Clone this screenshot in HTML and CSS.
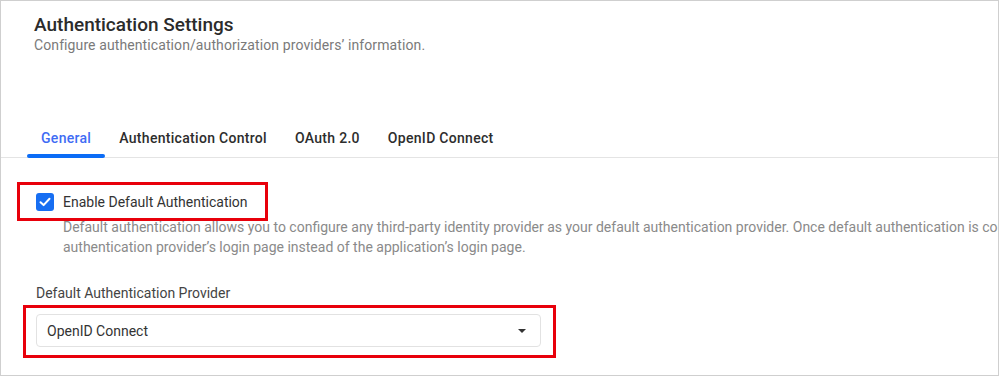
FILE: index.html
```html
<!DOCTYPE html>
<html>
<head>
<link rel="stylesheet" href="styles.css">
</head>
<body>
<div class="frame">
  <div class="header">
    <h1 class="title">Authentication Settings</h1>
    <p class="subtitle">Configure authentication/authorization providers’ information.</p>
  </div>

  <nav class="tabs">
    <a class="tab active">General</a>
    <a class="tab">Authentication Control</a>
    <a class="tab">OAuth 2.0</a>
    <a class="tab">OpenID Connect</a>
  </nav>

  <div class="content">
    <div class="check-row">
      <label class="check mark mark-check">
        <span class="box">
          <svg width="12" height="10" viewBox="0 0 12 10"><path d="M1.5 5.2 L4.6 8.1 L10.5 1.8" fill="none" stroke="#fff" stroke-width="2" stroke-linecap="round" stroke-linejoin="round"/></svg>
        </span>
        <span class="check-label">Enable Default Authentication</span>
      </label>
    </div>
    <p class="desc">Default authentication allows you to configure any third-party identity provider as your default authentication provider. Once default authentication is configured, users are redirected to the<br>authentication provider’s login page instead of the application’s login page.</p>

    <div class="field">
      <div class="field-label">Default Authentication Provider</div>
      <div class="mark mark-select">
        <div class="select">
          <span>OpenID Connect</span>
          <span class="caret"></span>
        </div>
      </div>
    </div>
  </div>
</div>
</body>
</html>
```

FILE: styles.css
```css
body {
    margin: 0;
    background: #fff;
}
.frame {
    width: 999px;
    height: 376px;
    box-sizing: border-box;
    border: 1px solid #cfcfcf;
    overflow: hidden;
    font-family: Roboto, 'Noto Sans', sans-serif;
    color: #333;
}
.header {
    padding: 13px 0 0 33px;
}
.title {
    margin: 0;
    font-size: 19px;
    font-weight: 500;
    line-height: 22px;
    color: #2b2b2b;
}
.subtitle {
    margin: 0;
    font-size: 14px;
    line-height: 18px;
    letter-spacing: 0.1px;
    color: #7a7a7a;
}
.tabs {
    display: flex;
    margin-top: 66px;
    padding-left: 26px;
    border-bottom: 1px solid #e4e4e4;
}
.tab {
    position: relative;
    height: 37px;
    box-sizing: border-box;
    padding: 10px 14px 0 14px;
    font-size: 14px;
    font-weight: 500;
    line-height: 16px;
    letter-spacing: 0.3px;
    color: #2d2d2d;
    cursor: pointer;
}
.tab.active {
    color: #3f6cf4;
}
.tab.active::after {
    content: '';
    position: absolute;
    left: 0;
    right: 0;
    bottom: -1px;
    height: 4px;
    border-radius: 2px;
    background: #0b6cf6;
}
.content {
    padding-left: 35px;
}
.check-row {
    margin-top: 35px;
    display: flex;
}
.check {
    display: flex;
    align-items: center;
    gap: 9px;
}
.box {
    width: 18px;
    height: 18px;
    border-radius: 3px;
    background: #176ef2;
    display: flex;
    align-items: center;
    justify-content: center;
}
.check-label {
    font-size: 14px;
    line-height: 18px;
    color: #333;
}
.desc {
    margin: 6px 0 0 27px;
    font-size: 14px;
    line-height: 20px;
    color: #8a8a8a;
    white-space: nowrap;
}
.field {
    margin-top: 27px;
}
.field-label {
    font-size: 14px;
    line-height: 18px;
    color: #444;
}
.select {
    margin-top: 12px;
    width: 505px;
    height: 33px;
    box-sizing: border-box;
    border: 1px solid #e2e2e2;
    border-radius: 4px;
    padding: 0 14px 0 10px;
    display: flex;
    align-items: center;
    justify-content: space-between;
    font-size: 14px;
    color: #333;
}
.caret {
    width: 0;
    height: 0;
    border-left: 4px solid transparent;
    border-right: 4px solid transparent;
    border-top: 4px solid #333;
}
/* red annotation frames drawn over the screenshot */
.mark {
    position: relative;
}
.mark::after {
    content: '';
    position: absolute;
    border: 3px solid #e8000b;
    pointer-events: none;
}
.mark-check::after {
    inset: -11px -20px -10px -19px;
}
.mark-select {
    display: inline-block;
}
.mark-select::after {
    inset: 3px -15px -11px -13px;
}
```
